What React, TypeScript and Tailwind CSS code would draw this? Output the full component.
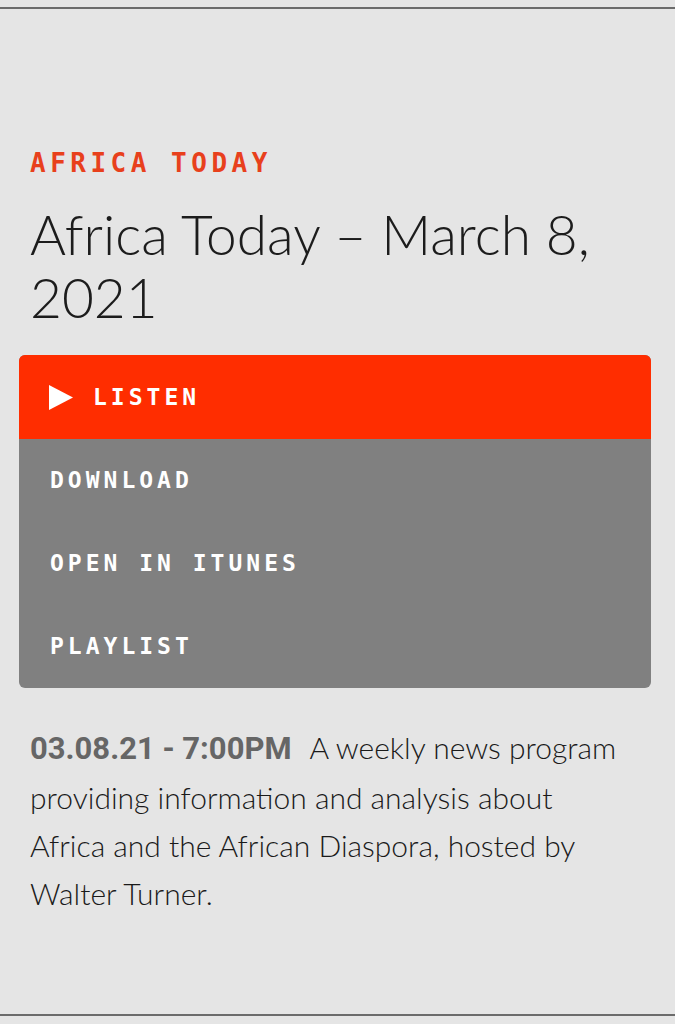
const mono = { fontFamily: '"DejaVu Sans Mono", "Liberation Mono", monospace' };
const geo = { fontFamily: 'Lato, "Noto Sans", sans-serif' };

const links = ["DOWNLOAD", "OPEN IN ITUNES", "PLAYLIST"];

export default function App() {
    return (
        <main className="min-h-screen w-[675px] bg-[#e5e5e5] flex flex-col">
            <div className="mt-[7px] h-[2px] bg-[#6b6b6b]" />

            <div className="flex-1 flex flex-col">
                <div className="px-[30px] pt-[131px]">
                    <p
                        className="text-[#e8401c] font-bold text-[26px] leading-[46px] tracking-[4.5px]"
                        style={mono}
                    >
                        AFRICA TODAY
                    </p>
                    <h1
                        className="mt-[17px] text-[#1c1c1c] font-light text-[55px] leading-[63px]"
                        style={geo}
                    >
                        Africa Today – March 8, 2021
                    </h1>
                </div>

                <div className="ml-[19px] mr-[24px] mt-[26px] rounded-[6px] overflow-hidden bg-[#808080]">
                    <div className="h-[84px] bg-[#ff2d00] flex items-center pl-[30px] gap-[20px]">
                        <svg width="24" height="25" viewBox="0 0 24 25" className="shrink-0">
                            <path d="M0 0 L24 12.5 L0 25 Z" fill="#ffffff" />
                        </svg>
                        <span className="text-white font-bold text-[23px] tracking-[4px]" style={mono}>
                            LISTEN
                        </span>
                    </div>
                    {links.map((label) => (
                        <div key={label} className="h-[83px] flex items-center pl-[31px]">
                            <span className="text-white font-bold text-[23px] tracking-[4px]" style={mono}>
                                {label}
                            </span>
                        </div>
                    ))}
                </div>

                <p
                    className="pl-[30px] pr-[45px] mt-[35px] text-[#1a1a1a] text-[30px] leading-[48px] font-light"
                    style={geo}
                >
                    <span
                        className="text-[#666666] font-bold text-[31px] mr-[18px]"
                        style={{ fontFamily: 'Roboto, "Liberation Sans", sans-serif' }}
                    >
                        03.08.21 - 7:00PM
                    </span>
                    A weekly news program providing information and analysis about Africa and the
                    African Diaspora, hosted by Walter Turner.
                </p>
            </div>

            <div className="mb-[8px] h-[2px] bg-[#6b6b6b]" />
        </main>
    );
}
